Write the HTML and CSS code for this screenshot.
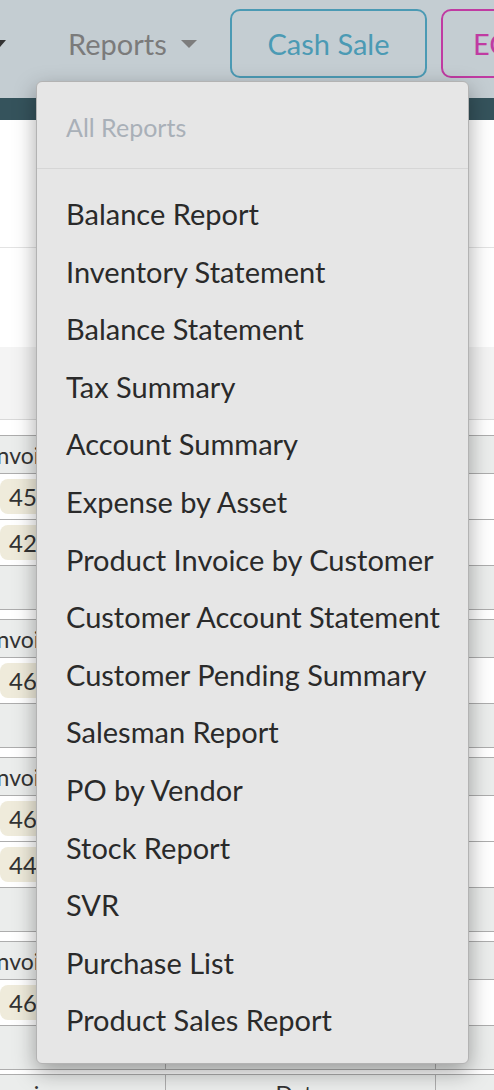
FILE: index.html
```html
<!DOCTYPE html>
<html>
<head>
<title>Invoices</title>
<link rel="stylesheet" href="styles.css">
</head>
<body>

<header class="topbar">
  <span class="nav-prev"><span class="caret caret-dark"></span></span>
  <a class="nav-item">Reports <span class="caret"></span></a>
  <button class="btn btn-cash">Cash Sale</button>
  <button class="btn btn-ec">ECR Sale</button>
</header>
<div class="subbar"></div>

<section class="summary">
  <div class="summary-top"></div>
  <div class="summary-mid"></div>
  <div class="summary-foot"></div>
</section>

<div class="groups" id="groups"></div>

<div class="dropdown">
  <div class="dropdown-head">All Reports</div>
  <ul class="dropdown-list" id="reportList"></ul>
</div>

<script>
  const reports = [
    "Balance Report", "Inventory Statement", "Balance Statement", "Tax Summary",
    "Account Summary", "Expense by Asset", "Product Invoice by Customer",
    "Customer Account Statement", "Customer Pending Summary", "Salesman Report",
    "PO by Vendor", "Stock Report", "SVR", "Purchase List", "Product Sales Report"
  ];

  const list = document.getElementById('reportList');
  reports.forEach(name => {
    const li = document.createElement('li');
    li.textContent = name;
    list.appendChild(li);
  });

  // invoice groups shown behind the menu
  const groups = [
    ["4512", "4278"],
    ["4631"],
    ["4655", "4419"],
    ["4670"],
    []
  ];

  const holder = document.getElementById('groups');
  groups.forEach(rows => {
    const table = document.createElement('table');
    table.className = 'inv-table';
    let html = '<colgroup><col class="c1"><col class="c2"><col class="c3"></colgroup>';
    html += '<tr class="head"><td>Invoice</td><td>Date</td><td></td></tr>';
    rows.forEach(no => {
      html += '<tr class="row"><td><span class="badge">' + no + '</span></td><td></td><td></td></tr>';
    });
    if (rows.length) {
      html += '<tr class="total"><td></td><td></td><td></td></tr>';
    }
    table.innerHTML = html;
    holder.appendChild(table);
  });
</script>

</body>
</html>
```

FILE: styles.css
```css
body {
  margin: 0;
  font-family: Lato, "Liberation Sans", sans-serif;
  background: #fff;
  color: #2e2e2e;
  overflow: hidden;
  position: relative;
}

/* top navigation */
.topbar {
  height: 98px;
  box-sizing: border-box;
  padding-top: 9px;
  background: #c4cdd2;
  display: flex;
  align-items: flex-start;
  overflow: hidden;
}
.topbar > * {
  flex-shrink: 0;
  height: 69px;
  display: flex;
  align-items: center;
  box-sizing: border-box;
}
.nav-prev {
  width: 74px;
  margin-left: -6px;
}
.nav-item {
  width: 148px;
  margin-right: 14px;
  font-size: 29px;
  color: #7b7b7b;
  gap: 14px;
}
.caret {
  width: 0;
  height: 0;
  border-left: 8px solid transparent;
  border-right: 8px solid transparent;
  border-top: 8px solid #7d7d7d;
}
.caret-dark {
  border-left-width: 6px;
  border-right-width: 6px;
  border-top: 7px solid #333;
}
.btn {
  font-family: inherit;
  font-size: 29px;
  background: transparent;
  border-radius: 10px;
  border: 2px solid;
  justify-content: center;
  padding: 0 30px;
}
.btn-cash {
  width: 197px;
  margin-right: 14px;
  color: #4b9ab4;
  border-color: #4b9ab4;
}
.btn-ec {
  width: 197px;
  color: #c03ba2;
  border-color: #c03ba2;
  justify-content: flex-start;
}
.subbar {
  height: 22px;
  background: #35535c;
}

/* summary card */
.summary-top {
  height: 127px;
  border-bottom: 1px solid #e3e3e3;
}
.summary-mid {
  height: 99px;
}
.summary-foot {
  height: 72px;
  background: #f4f4f4;
  border-bottom: 1px solid #d9d9d9;
}

/* invoice tables */
.groups {
  margin-top: 15px;
  margin-left: -100px;
}
.inv-table {
  width: 594px;
  table-layout: fixed;
  border-collapse: collapse;
  margin-bottom: 9px;
  font-size: 23px;
  color: #333;
}
.inv-table:nth-last-child(2) {
  margin-bottom: 4px;
}
.c1 { width: 265px; }
.c2 { width: 270px; }
.inv-table td {
  border-top: 1px solid #adadad;
  border-bottom: 1px solid #adadad;
  padding: 0;
  text-align: center;
  white-space: nowrap;
  overflow: hidden;
}
.inv-table td:nth-child(2) {
  border-left: 1px solid #adadad;
  border-right: 1px solid #adadad;
}
.head td {
  height: 37px;
  background: #ebedec;
}
.head td:first-child {
  padding-right: 12px;
}
.row td {
  height: 45px;
  background: #fff;
}
.row td:first-child {
  text-align: left;
  padding-left: 100px;
}
.total td {
  height: 43px;
  background: #ebedec;
}
.badge {
  display: inline-block;
  background: #efebdb;
  border-radius: 8px;
  padding: 3px 9px;
  font-size: 24px;
}

/* reports dropdown */
.dropdown {
  position: absolute;
  left: 36px;
  top: 81px;
  width: 433px;
  box-sizing: border-box;
  background: #e6e6e6;
  border: 1px solid #b3b3b3;
  border-radius: 6px;
  box-shadow: 0 8px 22px rgba(0, 0, 0, 0.35);
}
.dropdown-head {
  height: 87px;
  box-sizing: border-box;
  padding: 30px 29px 0;
  line-height: 30px;
  font-size: 25px;
  color: #a9b0b8;
  border-bottom: 1px solid #d6d6d6;
}
.dropdown-list {
  list-style: none;
  margin: 0;
  padding: 16px 0 14px;
}
.dropdown-list li {
  padding-left: 29px;
  line-height: 57.6px;
  font-size: 29px;
  color: #2a2a2a;
  white-space: nowrap;
}
```
